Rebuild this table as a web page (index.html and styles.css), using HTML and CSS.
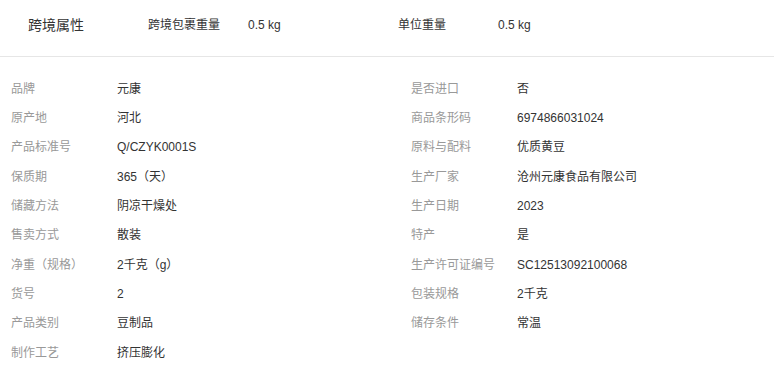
FILE: index.html
```html
<!DOCTYPE html>
<html lang="zh-CN">
<head>
<meta charset="utf-8">
<title>跨境属性</title>
<link rel="stylesheet" href="styles.css">
</head>
<body>
<div class="page">
  <div class="header">
    <div class="title">跨境属性</div>
    <div class="hitem"><span class="hlabel">跨境包裹重量</span><span class="hvalue">0.5 kg</span></div>
    <div class="hitem"><span class="hlabel">单位重量</span><span class="hvalue">0.5 kg</span></div>
  </div>
  <div class="attrs">
    <div class="attr"><span class="label">品牌</span><span class="value">元康</span></div>
    <div class="attr"><span class="label">是否进口</span><span class="value">否</span></div>
    <div class="attr"><span class="label">原产地</span><span class="value">河北</span></div>
    <div class="attr"><span class="label">商品条形码</span><span class="value">6974866031024</span></div>
    <div class="attr"><span class="label">产品标准号</span><span class="value">Q/CZYK0001S</span></div>
    <div class="attr"><span class="label">原料与配料</span><span class="value">优质黄豆</span></div>
    <div class="attr"><span class="label">保质期</span><span class="value">365（天）</span></div>
    <div class="attr"><span class="label">生产厂家</span><span class="value">沧州元康食品有限公司</span></div>
    <div class="attr"><span class="label">储藏方法</span><span class="value">阴凉干燥处</span></div>
    <div class="attr"><span class="label">生产日期</span><span class="value">2023</span></div>
    <div class="attr"><span class="label">售卖方式</span><span class="value">散装</span></div>
    <div class="attr"><span class="label">特产</span><span class="value">是</span></div>
    <div class="attr"><span class="label">净重（规格）</span><span class="value">2千克（g）</span></div>
    <div class="attr"><span class="label">生产许可证编号</span><span class="value">SC12513092100068</span></div>
    <div class="attr"><span class="label">货号</span><span class="value">2</span></div>
    <div class="attr"><span class="label">包装规格</span><span class="value">2千克</span></div>
    <div class="attr"><span class="label">产品类别</span><span class="value">豆制品</span></div>
    <div class="attr"><span class="label">储存条件</span><span class="value">常温</span></div>
    <div class="attr"><span class="label">制作工艺</span><span class="value">挤压膨化</span></div>
  </div>
</div>
</body>
</html>
```

FILE: styles.css
```css
* { box-sizing: border-box; }
html, body { margin: 0; padding: 0; background: #fff; }
body {
  font-family: "Liberation Sans", "Noto Sans CJK SC", sans-serif;
  font-size: 12px;
  color: #333;
}
.page { width: 775px; }
.header {
  display: flex;
  align-items: center;
  height: 57px;
  border-bottom: 1px solid #e6e6e6;
  margin-right: 1px;
  padding-bottom: 6px;
}
.title {
  width: 148px;
  padding-left: 28px;
  font-size: 14px;
  line-height: 18px;
  color: #333;
}
.hitem { display: flex; width: 250px; line-height: 16px; }
.hlabel { width: 100px; color: #333; }
.hvalue { color: #333; }
.attrs {
  display: grid;
  grid-template-columns: 400px 1fr;
  grid-auto-rows: 29.33px;
  padding-top: 17px;
}
.attr {
  display: flex;
  align-items: center;
  line-height: 16px;
}
.label {
  width: 117px;
  padding-left: 11px;
  color: #999;
}
.value { color: #333; }
```
